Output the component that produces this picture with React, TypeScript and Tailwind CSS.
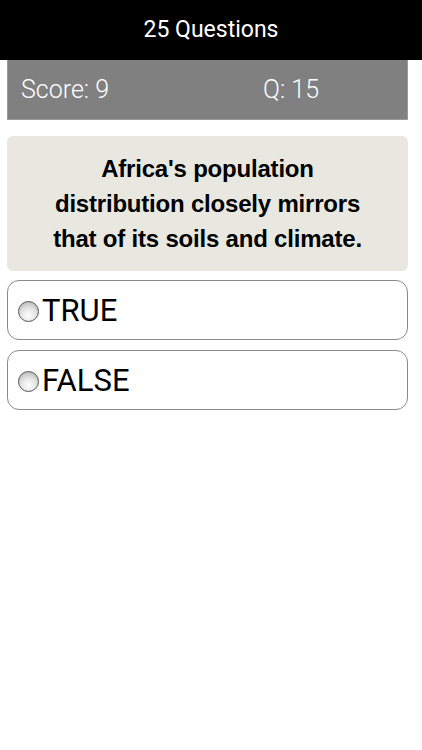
export default function App() {
  const options = ["TRUE", "FALSE"];
  return (
    <div className="w-[422px] min-h-[750px] bg-white font-['Roboto',sans-serif]">
      <div className="h-[60px] bg-black flex items-center justify-center">
        <span className="text-white text-[23px] font-normal">25 Questions</span>
      </div>
      <div className="ml-[7px] w-[401px]">
        <div className="h-[60px] bg-[#808080] border border-[#9a9a9a] border-t-0 flex items-center text-white text-[25px] font-light">
          <span className="pl-[13px] w-[255px]">Score: 9</span>
          <span>Q: 15</span>
        </div>
        <div className="mt-[16px] h-[135px] rounded-[6px] bg-[#e8e8e0] flex items-center justify-center px-2">
          <p className="text-center text-black text-[24px] leading-[35px] font-bold font-['Liberation_Sans',sans-serif] tracking-[-0.2px]">
            Africa's population
            <br />
            distribution closely mirrors
            <br />
            that of its soils and climate.
          </p>
        </div>
        <div className="mt-[9px] flex flex-col gap-[10px]">
          {options.map((o) => (
            <div
              key={o}
              className="h-[60px] rounded-[12px] border border-[#8a8a8a] flex items-center pl-[10px]"
            >
              <span className="w-[21px] h-[21px] mt-[3px] rounded-full border border-[#555] bg-[radial-gradient(circle_at_50%_70%,#ffffff_0%,#e4e4e4_45%,#a8a8a8_100%)]" />
              <span className="ml-[3px] text-black text-[31px] leading-none">{o}</span>
            </div>
          ))}
        </div>
      </div>
    </div>
  );
}
